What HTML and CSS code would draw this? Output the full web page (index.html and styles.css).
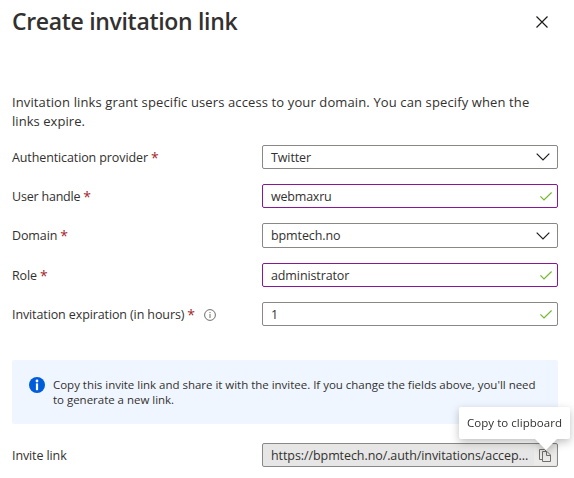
FILE: index.html
```html
<!DOCTYPE html>
<html lang="en">
<head>
<meta charset="utf-8">
<title>Create invitation link</title>
<link rel="stylesheet" href="styles.css">
</head>
<body>
<main class="panel">
  <header class="header">
    <h1 class="title">Create invitation link</h1>
    <svg class="close" viewBox="0 0 12 12"><path d="M.5.5l11 11M11.5.5l-11 11"/></svg>
  </header>
  <p class="intro">Invitation links grant specific users access to your domain. You can specify when the<br><span class="intro-end">links expire.</span></p>

  <div class="form">
    <div class="row">
      <div class="label"><span class="t-auth">Authentication provider</span><span class="req">*</span></div>
      <div class="field"><span class="t-twitter">Twitter</span><svg class="chevron" viewBox="0 0 14 8"><path d="M.7.7L7 7l6.3-6.3"/></svg></div>
    </div>
    <div class="row">
      <div class="label"><span class="t-user">User handle</span><span class="req">*</span></div>
      <div class="field edited"><span class="t-webmaxru">webmaxru</span><svg class="check" viewBox="0 0 12 9"><path d="M.4 4.3L4 7.9 11.6.5"/></svg></div>
    </div>
    <div class="row">
      <div class="label"><span class="t-domain">Domain</span><span class="req">*</span></div>
      <div class="field tall"><span class="t-bpm">bpmtech.no</span><svg class="chevron" viewBox="0 0 14 8"><path d="M.7.7L7 7l6.3-6.3"/></svg></div>
    </div>
    <div class="row">
      <div class="label"><span class="t-role">Role</span><span class="req">*</span></div>
      <div class="field edited"><span class="t-admin">administrator</span><svg class="check" viewBox="0 0 12 9"><path d="M.4 4.3L4 7.9 11.6.5"/></svg></div>
    </div>
    <div class="row">
      <div class="label"><span class="t-exp">Invitation expiration (in hours)</span><span class="req">*</span><svg class="hint" viewBox="0 0 12 12"><circle cx="6" cy="6" r="5.4"/><path d="M6 5v4M6 3v1.1"/></svg></div>
      <div class="field"><span>1</span><svg class="check" viewBox="0 0 12 9"><path d="M.4 4.3L4 7.9 11.6.5"/></svg></div>
    </div>
  </div>

  <div class="banner">
    <svg class="info" viewBox="0 0 16 16"><circle cx="8" cy="8" r="8" fill="#015cda"/><circle cx="8" cy="4" r="1.4" fill="#fff"/><path d="M6.9 6.4h2.2v6.8H6.9z" fill="#fff"/></svg>
    <p class="banner-text">Copy this invite link and share it with the invitee. If you change the fields above, you'll need<br>to generate a new link.</p>
  </div>

  <div class="row">
    <div class="label"><span class="t-invite">Invite link</span></div>
    <div class="field readonly">
      <span class="t-url">https://bpmtech.no/.auth/invitations/accep...</span>
      <div class="copy">
        <svg class="copy-icon" viewBox="0 0 12 13"><path d="M3.5 10.5h-3v-10h5l2 2M3.5 2.5h4.5l3.5 3.5v6.5h-8zM7.5 2.5v4h4"/></svg>
        <div class="tooltip"><span class="t-tip">Copy to clipboard</span><svg class="arrow" viewBox="0 0 24 12"><path d="M0 0h24L12 12z"/></svg></div>
      </div>
    </div>
  </div>
</main>
</body>
</html>
```

FILE: styles.css
```css
* { box-sizing: border-box; }
body {
  margin: 0;
  background: #fff;
  color: #323130;
  font-family: "Open Sans", "Noto Sans", sans-serif;
  font-size: 12.5px;
  line-height: 19px;
}
svg { display: block; flex: none; fill: none; }
span { white-space: nowrap; }
.panel { width: 558px; padding: 6px 0 0 12px; }
.header { display: flex; justify-content: space-between; height: 87px; padding-right: 10px; }
.title { margin: 0; font-size: 23px; font-weight: 600; line-height: 31px; letter-spacing: -0.32px; white-space: nowrap; }
.close { width: 12px; height: 12px; margin-top: 10px; stroke: #1b1a19; stroke-width: 1.15; }
.intro { margin: 0 0 14px; white-space: nowrap; height: 38px; font-size: 13px; letter-spacing: 0.12px; }
.intro-end { letter-spacing: 0.05px; }
.form { display: grid; row-gap: 15px; }
.row { display: grid; grid-template-columns: 250px 296px; align-items: center; letter-spacing: -0.11px; }
.label { display: flex; align-items: center; height: 24px; }
.req { color: #a4262c; margin-left: 3px; font-size: 14px; }
.t-user { letter-spacing: -0.2px; }
.t-webmaxru { letter-spacing: -0.2px; }
.t-bpm { letter-spacing: -0.1px; }
.t-url { letter-spacing: -0.08px; }
.hint { width: 12px; height: 12px; margin: 1px 0 0 9px; stroke: #605e5c; stroke-width: 0.9; }
.field {
  display: flex; align-items: center; justify-content: space-between;
  height: 24px; padding: 0 5px 0 8px;
  border: 1px solid #8a8886; border-radius: 2px;
}
.field.tall { height: 25px; }
.edited { border-color: #881798; }
.chevron { width: 14px; height: 8px; margin-right: 2px; stroke: #1b1a19; stroke-width: 1.15; }
.check { width: 12px; height: 9px; stroke: #73b82e; stroke-width: 1.2; }
.banner { display: flex; height: 64px; margin: 34px 0 19px; padding: 17px 0 0 17px; background: #f0f6ff; border-radius: 2px; }
.info { width: 16px; height: 16px; margin-right: 8px; }
.banner-text { margin: 0; font-size: 11.5px; line-height: 15px; letter-spacing: -0.02px; white-space: nowrap; }
.readonly { background: #e6e6e6; padding-right: 0; }
.copy { position: relative; display: flex; flex: none; align-items: center; justify-content: center; width: 22px; height: 20px; margin-right: 1px; background: #edebe9; }
.copy-icon { width: 12px; height: 13px; margin-top: 1px; stroke: #716f6d; stroke-width: 1; }
.tooltip {
  position: absolute; right: -14px; bottom: 26px; width: 111px; height: 32px; padding: 6px 8px;
  background: #fff; border-radius: 2px; font-size: 11.5px; letter-spacing: 0.04px;
  filter: drop-shadow(0 3px 4px rgba(0, 0, 0, .25));
}
.arrow { position: absolute; left: 75px; top: 31px; width: 24px; height: 12px; fill: #fff; }
```
